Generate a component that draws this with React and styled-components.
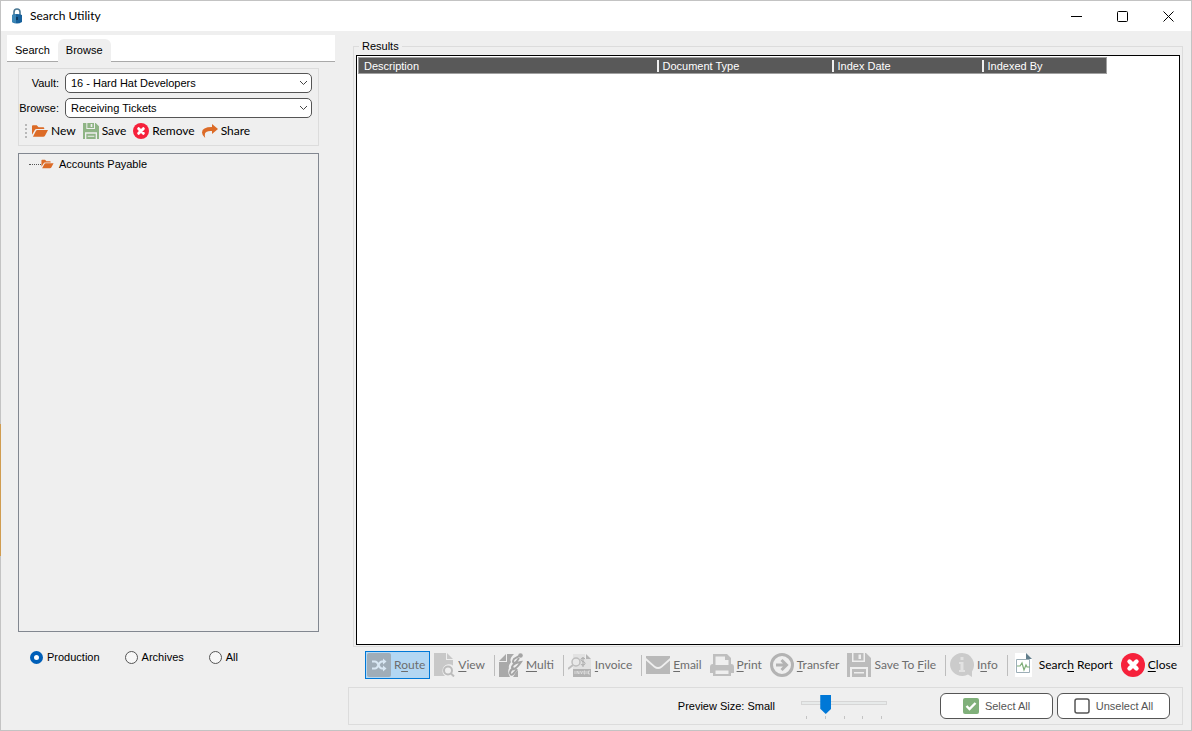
import React, { useState } from 'react'
import styled, { createGlobalStyle, css } from 'styled-components'

const sans = `'Liberation Sans', Arial, sans-serif`
const ui = `Lato, 'Segoe UI', sans-serif`

const GlobalStyle = createGlobalStyle`
  * {
    box-sizing: border-box;
  }
  body {
    margin: 0;
    background: #efefef;
    color: #000;
    font-family: ${sans};
    font-size: 11px;
    line-height: 14px;
  }
  button, input, select {
    margin: 0;
    font: inherit;
    color: inherit;
  }
`

const Screen = styled.div`
  display: flex;
  min-height: 100vh;
  padding: 1px;
  background: linear-gradient(to bottom, #c3c3c3 58%, #d09c50 58%, #d09c50 76%, #c3c3c3 76%) left / 1px 100% no-repeat #c3c3c3;
`

const Window = styled.div`
  flex: 1;
  display: flex;
  flex-direction: column;
  min-width: 0;
  background: #efefef;
`

const TitleBar = styled.header`
  display: flex;
  align-items: center;
  height: 30px;
  padding-left: 10px;
  background: #fff;
`

const Title = styled.h1`
  flex: 1;
  margin: 0 0 0 7px;
  font: 400 12px/16px ${ui};
`

const CaptionButton = styled.button`
  display: flex;
  align-items: center;
  justify-content: center;
  width: 46px;
  height: 30px;
  padding: 0;
  border: 0;
  background: none;
`

const Body = styled.main`
  flex: 1;
  display: grid;
  grid-template-columns: 347px 1fr;
`

const Side = styled.aside`
  display: flex;
  flex-direction: column;
  padding: 4px 13px 0 6px;
`

const Tabs = styled.div`
  display: flex;
  align-items: flex-end;
  height: 27px;
  border-bottom: 1px solid #a9a9a9;
  background: #fff;
`

const Tab = styled.button`
  height: 23px;
  margin-bottom: -1px;
  padding: 0 8px 2px;
  border: 0;
  border-radius: 6px 6px 0 0;
  background: ${props => (props.$active ? '#efefef' : 'transparent')};
`

const SidePanel = styled.div`
  flex: 1;
  display: flex;
  flex-direction: column;
  padding: 6px 16px 0 11px;
`

const Filters = styled.div`
  height: 78px;
  padding: 4px 6px 0 0;
  border: 1px solid #dcdcdc;
`

const Field = styled.div`
  display: flex;
  align-items: center;
  justify-content: flex-end;
  gap: 6px;
  height: 20px;
  margin-bottom: 5px;
`

const SelectBox = styled.div`
  position: relative;
  width: 247px;

  svg {
    position: absolute;
    top: 7px;
    right: 4px;
    pointer-events: none;
  }
`

const Select = styled.select`
  display: block;
  width: 100%;
  height: 20px;
  padding: 0 20px 0 5px;
  border: 1px solid #555;
  border-radius: 5px;
  background: #fff;
  appearance: none;
`

const FolderActions = styled.div`
  display: flex;
  align-items: center;
  gap: 7px;
  height: 20px;
  margin-top: -2px;
  padding-left: 6px;
`

const Grip = styled.span`
  width: 2px;
  height: 15px;
  margin-right: -2px;
  background: repeating-linear-gradient(#b8b8b8 0 2px, transparent 2px 4px);
`

const FolderAction = styled.button`
  display: flex;
  align-items: center;
  gap: 3px;
  padding: 0;
  border: 0;
  background: none;
  font: 12px/16px ${ui};
`

const Tree = styled.div`
  flex: 1;
  margin-top: 7px;
  padding: 3px 0 0 10px;
  border: 1px solid #828790;
`

const TreeItem = styled.div`
  display: flex;
  align-items: center;
  height: 14px;

  &::before {
    content: '';
    width: 12px;
    border-top: 1px dotted #555;
  }
  svg {
    margin-right: 5px;
  }
`

const Scopes = styled.div`
  display: flex;
  gap: 25px;
  height: 98px;
  padding: 18px 0 0 12px;
`

const Scope = styled.label`
  display: flex;
  align-items: center;
  gap: 4px;
  height: 14px;
`

const Radio = styled.input`
  width: 13px;
  height: 13px;
  border: 1px solid #555;
  border-radius: 50%;
  background: #f7f7f7;
  appearance: none;

  &:checked {
    border: 4px solid #005fb8;
    background: #fff;
  }
`

const Content = styled.section`
  display: flex;
  flex-direction: column;
  min-width: 0;
  padding: 8px 8px 5px 0;
`

const Results = styled.fieldset`
  flex: 1;
  display: flex;
  flex-direction: column;
  min-width: 0;
  margin: 0 0 0 5px;
  padding: 2px 2px 1px;
  border: 1px solid #dcdcdc;

  legend {
    margin-left: 3px;
    padding: 0 3px;
  }
`

const List = styled.div`
  flex: 1;
  padding: 1px;
  border: 1px solid #000;
  background: #fff;
`

const Table = styled.table`
  width: 749px;
  max-width: 100%;
  table-layout: fixed;
  border-collapse: collapse;
  border: 1px solid #a0a0a0;
  background: #595959;
  color: #fff;

  th {
    height: 16px;
    padding: 0 5px;
    border-bottom: 1px solid #a0a0a0;
    font-weight: 400;
    text-align: left;
  }
  th + th span {
    margin-left: -5px;
    padding-left: 4px;
    border-left: 2px solid #f0f0f0;
  }
`

const Toolbar = styled.div`
  display: flex;
  align-items: center;
  height: 28px;
  margin: 4px 0 8px 17px;
  font: 12px/16px ${ui};
`

const tone = css`
  color: ${props => (props.$enabled ? '#000' : '#6d6d6d')};
`

const ToolButton = styled.button`
  display: flex;
  align-items: center;
  gap: 3px;
  height: 28px;
  margin-right: 1px;
  padding: 0 4px 0 1px;
  border: 1px solid ${props => (props.$active ? '#0078d7' : 'transparent')};
  background: ${props => (props.$active ? '#b3d7f3' : 'none')};
  white-space: nowrap;
  ${tone}

  span {
    text-decoration: underline;
    text-underline-offset: 2px;
  }
`

const Divider = styled.span`
  width: 1px;
  height: 21px;
  margin: 0 2px 0 3px;
  background: #bdbdbd;
`

const Footer = styled.footer`
  display: flex;
  align-items: center;
  justify-content: flex-end;
  height: 38px;
  padding-right: 12px;
  border: 1px solid #dcdcdc;
`

const Preview = styled.div`
  display: flex;
  align-items: center;
  gap: 26px;
  margin-right: 49px;
`

const Slider = styled.div`
  width: 86px;
`

const Range = styled.input`
  display: block;
  width: 100%;
  height: 19px;
  background: none;
  appearance: none;

  &::-webkit-slider-runnable-track {
    height: 4px;
    border: 1px solid #d6d6d6;
    background: #e7eaea;
  }
  &::-webkit-slider-thumb {
    width: 11px;
    height: 19px;
    margin-top: -7px;
    background: #0078d7;
    clip-path: polygon(0 0, 100% 0, 100% 72%, 50% 100%, 0 72%);
    appearance: none;
  }
`

const Ticks = styled.div`
  display: flex;
  justify-content: space-between;
  height: 3px;
  margin: 3px 5px 0;

  i {
    width: 1px;
    background: #c4c4c4;
  }
`

const SelectionButton = styled.button`
  display: flex;
  align-items: center;
  justify-content: center;
  gap: 6px;
  width: 113px;
  height: 26px;
  margin-left: 4px;
  padding: 0;
  border: 1px solid #555;
  border-radius: 6px;
  background: #fff;
  color: #555;
`

const FolderIcon = ({ width = 16, height = 14 }) => (
  <svg width={width} height={height} viewBox="0 0 17 14" aria-hidden="true">
    <path fill="#dc6b27" d="M0 11V2q0-1 1-1h4l2 2h5q1 0 1 1v1H5Q3.500 5 2.700 6.500zM1 13l3-5.800Q4.500 6 6 6h11l-3.200 6q-.6 1-1.800 1z" />
  </svg>
)

const FloppyIcon = ({ size = 24, color = '#bcbcbc' }) => (
  <svg width={size} height={size} viewBox="0 0 24 24" aria-hidden="true">
    <path fill={color} fillRule="evenodd" d="M0 0h5v9h13V0h1l5 5v19h-3V14H3v10H0zM6.500 0h10v7.500h-10zM11.500 1.500V6H14V1.500zM5 16h14v8H5zM7 19v1.500h10V19z" />
  </svg>
)

const CrossIcon = ({ size = 24 }) => (
  <svg width={size} height={size} viewBox="0 0 24 24" aria-hidden="true">
    <circle cx="12" cy="12" r="12" fill="#f6213b" />
    <path d="M8.500 8.500l7 7M15.500 8.500l-7 7" stroke="#fff" strokeWidth="4.400" strokeLinecap="round" />
  </svg>
)

const ShareIcon = () => (
  <svg width="16" height="14" viewBox="0 0 16 14" aria-hidden="true">
    <path fill="#dc6b27" d="M10 0l6 5-6 5V7Q4 6.500 3 9.500 2.500 11 3.200 14 0 11.500 0 8.500 0 3 10 3z" />
  </svg>
)

const LockIcon = () => (
  <svg width="12" height="16" viewBox="0 0 12 16" aria-hidden="true">
    <path d="M3 8V4q0-3 3-3t3 3v4" fill="none" stroke="#4a7894" strokeWidth="1.600" />
    <path d="M1 7q5-2 10 0v7q-5 3-10 0z" fill="#16609b" />
    <path d="M1 7q2-1 4-1v9q-2 0-4-1z" fill="#3c86b5" />
    <path d="M6 9v3" stroke="#0a2e4e" strokeWidth="1.500" />
  </svg>
)

const Chevron = () => (
  <svg width="9" height="6" viewBox="0 0 9 6" aria-hidden="true">
    <path d="M1 1l3.500 3.500L8 1" fill="none" stroke="#444" />
  </svg>
)

const RouteIcon = () => (
  <svg width="24" height="24" viewBox="0 0 24 24" aria-hidden="true">
    <rect width="24" height="24" rx="2" fill="#a0adb8" />
    <path d="M5 8.500h3q2 0 3.500 3.500t3.500 3.500h2M5 15.500h3q2 0 3.500-3.500T15 8.500h2" fill="none" stroke="#d9e7f3" strokeWidth="2" />
    <path d="M16 5.500l3.500 3-3.500 3zM16 12.500l3.500 3-3.500 3z" fill="#d9e7f3" />
  </svg>
)

const ViewIcon = () => (
  <svg width="22" height="24" viewBox="0 0 22 24" aria-hidden="true">
    <path d="M1 0h12v7h7v5.500a6 6 0 0 0-8 10.500H1zM14 0l6 6h-6z" fill="#c8c8c8" />
    <circle cx="15" cy="17.500" r="4" fill="none" stroke="#bcbcbc" strokeWidth="2" />
    <path d="M18 20.500l3 3" stroke="#bcbcbc" strokeWidth="2" />
  </svg>
)

const MultiIcon = () => (
  <svg width="24" height="24" viewBox="0 0 24 24" aria-hidden="true">
    <path d="M8 1h7q-5 5-3 8-3 4-2 6-2 4 1 9H0V9h8zM7 1v7H0z" fill="#a9a9a9" />
    <path d="M17 19l2-2v7h-5z" fill="#a9a9a9" />
    <g fill="none" stroke="#a4a4a4" strokeWidth="2">
      <path d="M20 3l-5 3q-2 3 0 4 2 0 5-5M22 9q-8 1-9 5 0 3 2 2 3-1 7-7zM15 15q-4 2-4 5 1 3 3 1 2-2 4-5" />
    </g>
    <circle cx="21.500" cy="2.500" r="2.300" fill="#a4a4a4" />
  </svg>
)

const InvoiceIcon = () => (
  <svg width="24" height="24" viewBox="0 0 24 24" aria-hidden="true">
    <path d="M5 1h12v5h6v10H5z" fill="#e2e2e2" />
    <path d="M18 1l5 5h-5z" fill="#b5b5b5" />
    <circle cx="8" cy="9" r="4" fill="#e8e8e8" stroke="#bdbdbd" strokeWidth="1.500" />
    <path d="M5 12l-5 4" stroke="#bdbdbd" strokeWidth="2" />
    <path d="M17 6q-1-1-2-1-2 0-2 1.500T15 8.500t2 2-2 1.500-2-1M15 4v10" fill="none" stroke="#aaa" />
    <path d="M5 16h18v8H5z" fill="#b3b3b3" />
    <path d="M7 18v3M9 21v-3l2 3v-3M12.500 18l1 3 1-3M16 18h1v3h-1zM19 18v3M22 18h-1.500v3H22" fill="none" stroke="#e5e5e5" strokeWidth=".8" />
  </svg>
)

const MailIcon = () => (
  <svg width="24" height="24" viewBox="0 0 24 24" aria-hidden="true">
    <path d="M0 3h24v2l-9 8q-3 2-6 0L0 5zM0 7.500l8 7q4 3 8 0l8-7V21H0z" fill="#b9b9b9" />
  </svg>
)

const PrintIcon = () => (
  <svg width="24" height="24" viewBox="0 0 24 24" aria-hidden="true">
    <path fillRule="evenodd" d="M3 11V1h14l4 4v6q3 0 3 3v6h-3v3H3v-3H0v-6q0-3 3-3zM5.500 3.500V12h13V7H15V3.500zM5.500 17.500V21h13v-3.500z" fill="#bfbfbf" />
  </svg>
)

const TransferIcon = () => (
  <svg width="24" height="24" viewBox="0 0 24 24" fill="none" aria-hidden="true">
    <circle cx="12" cy="12" r="10.500" stroke="#b3b3b3" strokeWidth="3" />
    <path d="M6 12h10M11.500 7l5 5-5 5" stroke="#b3b3b3" strokeWidth="3" />
  </svg>
)

const InfoIcon = () => (
  <svg width="24" height="24" viewBox="0 0 24 24" aria-hidden="true">
    <path d="M12 0a12 11.500 0 1 0 6 21.500l4 2.500v-5.500A12 12 0 0 0 12 0z" fill="#cbcbcb" />
    <path d="M10.500 4h3v3h-3zM9 9h4.500v8H15v2H9v-2h1.500v-6H9z" fill="#e2e2e2" />
  </svg>
)

const ReportIcon = () => (
  <svg width="24" height="24" viewBox="0 0 24 24" aria-hidden="true">
    <path d="M3 0h11l6 6v18H3z" fill="#fff" />
    <path d="M14 0l6 6h-6z" fill="#607d8b" />
    <path d="M4.500 6.500h13v13h-13z" fill="none" stroke="#9caeb7" />
    <path d="M5 13h3l2-3 2 7 2-5 1 2h3" fill="none" stroke="#7ead78" strokeWidth="1.200" />
  </svg>
)

const CheckBoxIcon = ({ checked }) => (
  <svg width="16" height="16" viewBox="0 0 16 16" fill="none" aria-hidden="true">
    {checked ? (
      <>
        <rect width="16" height="16" rx="2" fill="#80b07a" />
        <path d="M3.500 8l3 3 6-6" stroke="#fff" strokeWidth="2.400" />
      </>
    ) : (
      <rect x="1" y="1" width="14" height="14" rx="2" stroke="#555" strokeWidth="1.500" />
    )}
  </svg>
)

const columns = [
  { label: 'Description', width: 298 },
  { label: 'Document Type', width: 175 },
  { label: 'Index Date', width: 150 },
  { label: 'Indexed By' },
]

// `key` is the index of the underlined access key in the label
const tools = [
  { label: 'Route', key: 1, icon: <RouteIcon />, active: true },
  { label: 'View', key: 0, icon: <ViewIcon />, divided: true },
  { label: 'Multi', key: 0, icon: <MultiIcon />, divided: true },
  { label: 'Invoice', key: 0, icon: <InvoiceIcon />, divided: true },
  { label: 'Email', key: 0, icon: <MailIcon /> },
  { label: 'Print', key: 0, icon: <PrintIcon /> },
  { label: 'Transfer', key: 0, icon: <TransferIcon /> },
  { label: 'Save To File', key: 8, icon: <FloppyIcon />, divided: true },
  { label: 'Info', key: 1, icon: <InfoIcon />, divided: true },
  { label: 'Search Report', key: 5, icon: <ReportIcon />, enabled: true },
  { label: 'Close', key: 0, icon: <CrossIcon />, enabled: true },
]

const App = () => {
  const [scope, setScope] = useState('Production')
  const [size, setSize] = useState(2)

  return (
    <Screen>
      <GlobalStyle />
      <Window>
        <TitleBar>
          <LockIcon />
          <Title>Search Utility</Title>
          <CaptionButton aria-label="Minimize">
            <svg width="11" height="11"><path d="M0 5.500h11" stroke="#000" /></svg>
          </CaptionButton>
          <CaptionButton aria-label="Maximize">
            <svg width="11" height="11"><rect x=".5" y=".5" width="10" height="10" rx="1" fill="none" stroke="#000" /></svg>
          </CaptionButton>
          <CaptionButton aria-label="Close window">
            <svg width="11" height="11"><path d="M.5.5l10 10M10.500.5l-10 10" stroke="#000" /></svg>
          </CaptionButton>
        </TitleBar>
        <Body>
          <Side>
            <Tabs role="tablist">
              <Tab role="tab">Search</Tab>
              <Tab role="tab" $active aria-selected>Browse</Tab>
            </Tabs>
            <SidePanel>
              <Filters>
                <Field>
                  <label htmlFor="vault">Vault:</label>
                  <SelectBox>
                    <Select id="vault"><option>16 - Hard Hat Developers</option></Select>
                    <Chevron />
                  </SelectBox>
                </Field>
                <Field>
                  <label htmlFor="browse">Browse:</label>
                  <SelectBox>
                    <Select id="browse"><option>Receiving Tickets</option></Select>
                    <Chevron />
                  </SelectBox>
                </Field>
                <FolderActions>
                  <Grip />
                  <FolderAction><FolderIcon />New</FolderAction>
                  <FolderAction><FloppyIcon size={16} color="#8fb485" />Save</FolderAction>
                  <FolderAction><CrossIcon size={16} />Remove</FolderAction>
                  <FolderAction><ShareIcon />Share</FolderAction>
                </FolderActions>
              </Filters>
              <Tree>
                <TreeItem><FolderIcon width={13} height={10} />Accounts Payable</TreeItem>
              </Tree>
              <Scopes>
                {['Production', 'Archives', 'All'].map(name => (
                  <Scope key={name}>
                    <Radio type="radio" name="scope" checked={scope === name} onChange={() => setScope(name)} />
                    {name}
                  </Scope>
                ))}
              </Scopes>
            </SidePanel>
          </Side>
          <Content>
            <Results>
              <legend>Results</legend>
              <List>
                <Table>
                  <thead>
                    <tr>
                      {columns.map(({ label, width }) => (
                        <th key={label} width={width}><span>{label}</span></th>
                      ))}
                    </tr>
                  </thead>
                </Table>
              </List>
            </Results>
            <Toolbar>
              {tools.map(({ label, key, icon, active, divided, enabled }) => (
                <React.Fragment key={label}>
                  <ToolButton $active={active} $enabled={enabled}>
                    {icon}
                    <div>
                      {label.slice(0, key)}
                      <span>{label[key]}</span>
                      {label.slice(key + 1)}
                    </div>
                  </ToolButton>
                  {divided && <Divider />}
                </React.Fragment>
              ))}
            </Toolbar>
            <Footer>
              <Preview>
                <label htmlFor="size">Preview Size: Small</label>
                <Slider>
                  <Range id="size" type="range" min="1" max="5" value={size} onChange={e => setSize(e.target.value)} />
                  <Ticks><i /><i /><i /><i /><i /></Ticks>
                </Slider>
              </Preview>
              <SelectionButton><CheckBoxIcon checked />Select All</SelectionButton>
              <SelectionButton><CheckBoxIcon />Unselect All</SelectionButton>
            </Footer>
          </Content>
        </Body>
      </Window>
    </Screen>
  )
}

export default App
